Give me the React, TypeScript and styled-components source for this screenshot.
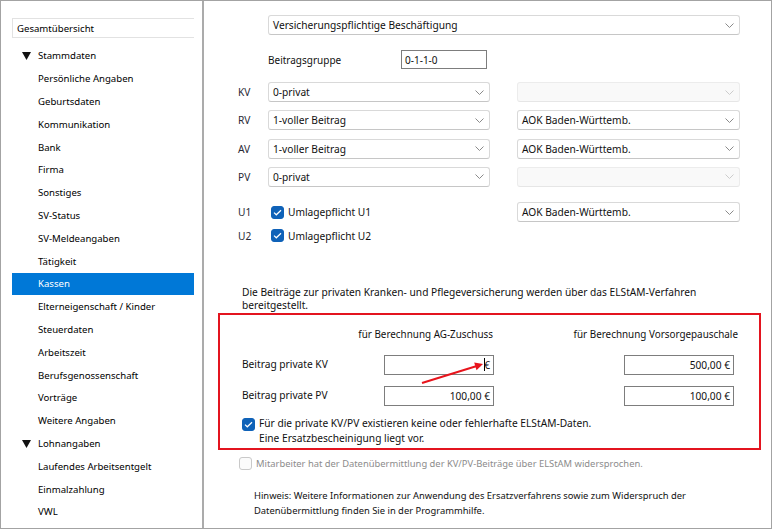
import React from 'react';
import styled, { createGlobalStyle } from 'styled-components';

const GlobalStyle = createGlobalStyle`
  html, body { margin: 0; padding: 0; background: #fff; }
  body {
    font-family: "Noto Sans", "Open Sans", sans-serif;
    font-size: 9.6px;
    color: #111;
  }
  * { box-sizing: border-box; }
`;

const Window = styled.div`
  width: 772px;
  height: 529px;
  display: flex;
  border: 1px solid #a3a3a3;
  background: #fff;
  overflow: hidden;
`;

/* ---------- Sidebar ---------- */
const Sidebar = styled.nav`
  width: 203px;
  flex: none;
  border-right: 2px solid #ababab;
  padding: 17px 0 0 11px;
`;

const SearchBox = styled.div`
  width: 182px;
  height: 20px;
  border: 1px solid #e2e2e2;
  border-right: none;
  display: flex;
  align-items: center;
  padding-left: 4px;
  color: #000;
`;

const Tree = styled.ul`
  list-style: none;
  margin: 6.6px 0 0 0;
  padding: 0;
`;

const TreeRow = styled.li<{ $group?: boolean; $selected?: boolean }>`
  width: 182px;
  height: 22.8px;
  display: flex;
  align-items: center;
  padding-left: ${p => (p.$group ? '10px' : '26px')};
  background: ${p => (p.$selected ? '#0078d7' : 'transparent')};
  color: ${p => (p.$selected ? '#fff' : '#000')};
  white-space: nowrap;
`;

const Caret = styled.span`
  width: 16px;
  display: inline-flex;
  align-items: center;
`;

/* ---------- Main ---------- */
const Main = styled.main`
  flex: 1;
  position: relative;
  display: flex;
  flex-direction: column;
  font-size: 10.2px;
`;

const SelectBox = styled.div<{ $disabled?: boolean; $width?: number; $col?: number }>`
  width: ${p => (p.$width ? `${p.$width}px` : 'auto')};
  grid-column: ${p => p.$col ?? 'auto'};
  height: 20px;
  display: flex;
  align-items: center;
  justify-content: space-between;
  padding: 0 5px 0 4px;
  border: 1px solid ${p => (p.$disabled ? '#ececec' : '#d9d9d9')};
  border-bottom-color: ${p => (p.$disabled ? '#e6e6e6' : '#c6c6c6')};
  border-radius: 3px;
  background: ${p => (p.$disabled ? '#f9f9f9' : '#fff')};
  color: #111;
  white-space: nowrap;
`;

const TopSelect = styled(SelectBox)`
  margin: 14px 0 0 64px;
`;

const GroupRow = styled.div`
  margin: 15px 0 0 64px;
  height: 19px;
  display: flex;
  align-items: center;
  font-size: 10px;
`;

const GroupLabel = styled.span`
  width: 133px;
`;

const TextBox = styled.div<{ $align?: 'left' | 'right'; $w?: number; $h?: number; $col?: number }>`
  width: ${p => p.$w ?? 110}px;
  height: ${p => p.$h ?? 20}px;
  grid-column: ${p => p.$col ?? 'auto'};
  border: 1px solid #7d7d7d;
  background: #fff;
  display: flex;
  align-items: center;
  justify-content: ${p => (p.$align === 'right' ? 'flex-end' : 'flex-start')};
  padding: 0 3px;
  color: #111;
`;

const InsList = styled.div`
  margin: 13px 0 0 34px;
  display: flex;
  flex-direction: column;
  gap: 8.3px;
`;

const InsRow = styled.div`
  display: grid;
  grid-template-columns: 30px 222px 27px 223px;
  align-items: center;
  height: 20px;
`;

const URows = styled.div`
  margin: 15.6px 0 0 34px;
  display: flex;
  flex-direction: column;
  gap: 3.2px;
`;

const RowLabel = styled.span`
  grid-column: 1;
  color: #2a2a35;
`;

const CheckLine = styled.label<{ $pad?: number; $disabled?: boolean }>`
  grid-column: 2;
  display: flex;
  align-items: center;
  gap: 4px;
  padding-left: ${p => p.$pad ?? 0}px;
  color: ${p => (p.$disabled ? '#8c8c8c' : '#111')};
  white-space: nowrap;
`;

const CheckBox = styled.span<{ $checked?: boolean }>`
  width: 13px;
  height: 13px;
  flex: none;
  border-radius: 3px;
  display: inline-flex;
  align-items: center;
  justify-content: center;
  background: ${p => (p.$checked ? '#0f62b8' : '#fbfbfb')};
  border: 1px solid ${p => (p.$checked ? '#0f62b8' : '#c9c9c9')};
`;

const Paragraph = styled.p<{ $mt: number; $lh: number; $ml: number; $fs?: number }>`
  margin: ${p => p.$mt}px 0 0 ${p => p.$ml}px;
  line-height: ${p => p.$lh}px;
  font-size: ${p => p.$fs ?? 10.2}px;
  color: #111;
`;

const RedBox = styled.section`
  margin: 0 0 0 14px;
  width: 543px;
  height: 137px;
  border: 2px solid #e3141f;
  padding: 11px 0 0 22px;
  display: grid;
  grid-template-columns: 142px 110px 130px 110px;
  grid-template-rows: 16px 33px 31px auto;
  align-items: end;
`;

const ColHead = styled.div<{ $col: string; $mr?: number }>`
  grid-column: ${p => p.$col};
  align-self: center;
  text-align: right;
  white-space: nowrap;
  margin-right: ${p => p.$mr ?? 0}px;
  font-size: 9.9px;
`;

const AmountLabel = styled.span`
  grid-column: 1;
  align-self: end;
  height: 20px;
  display: flex;
  align-items: center;
  padding-bottom: 2px;
`;

const BoxCheck = styled.div`
  grid-column: 1 / 5;
  display: flex;
  align-items: flex-start;
  gap: 4px;
  margin-top: 10px;
  line-height: 15px;
  align-self: start;
`;

const BoxCheckMark = styled(CheckBox)`
  margin-top: 2px;
`;

const DisabledRow = styled(CheckLine)`
  margin: 6px 0 0 35px;
  height: 15px;
  font-size: 9.4px;
`;

const TextCaret = styled.span`
  display: inline-block;
  width: 1px;
  height: 13px;
  background: #000;
  margin-right: -1px;
`;

const Arrow = styled.svg`
  position: absolute;
  left: 214px;
  top: 357px;
  width: 72px;
  height: 30px;
  overflow: visible;
`;

const Chevron = ({ light }: { light?: boolean }) => (
  <svg width="9" height="5" viewBox="0 0 9 5">
    <polyline points="0.5,0.5 4.5,4.5 8.5,0.5" fill="none" stroke={light ? '#cccccc' : '#8a8a8a'} strokeWidth="1" />
  </svg>
);

const Select = ({ value, disabled, col }: { value?: string; disabled?: boolean; col?: number }) => (
  <SelectBox $disabled={disabled} $col={col}>
    <span>{value ?? ''}</span>
    <Chevron light={disabled} />
  </SelectBox>
);

const CheckMarkSvg = () => (
  <svg width="9" height="7" viewBox="0 0 9 7">
    <polyline points="1,3.6 3.3,5.8 8,1.2" fill="none" stroke="#fff" strokeWidth="1.2" />
  </svg>
);

const Check = ({ checked }: { checked?: boolean }) => (
  <CheckBox $checked={checked}>{checked && <CheckMarkSvg />}</CheckBox>
);

const tree: { label: string; group?: boolean; selected?: boolean }[] = [
  { label: 'Stammdaten', group: true },
  { label: 'Persönliche Angaben' },
  { label: 'Geburtsdaten' },
  { label: 'Kommunikation' },
  { label: 'Bank' },
  { label: 'Firma' },
  { label: 'Sonstiges' },
  { label: 'SV-Status' },
  { label: 'SV-Meldeangaben' },
  { label: 'Tätigkeit' },
  { label: 'Kassen', selected: true },
  { label: 'Elterneigenschaft / Kinder' },
  { label: 'Steuerdaten' },
  { label: 'Arbeitszeit' },
  { label: 'Berufsgenossenschaft' },
  { label: 'Vorträge' },
  { label: 'Weitere Angaben' },
  { label: 'Lohnangaben', group: true },
  { label: 'Laufendes Arbeitsentgelt' },
  { label: 'Einmalzahlung' },
  { label: 'VWL' },
];

const ins = [
  { k: 'KV', v: '0-privat', kasse: '' },
  { k: 'RV', v: '1-voller Beitrag', kasse: 'AOK Baden-Württemb.' },
  { k: 'AV', v: '1-voller Beitrag', kasse: 'AOK Baden-Württemb.' },
  { k: 'PV', v: '0-privat', kasse: '' },
];

export default function App() {
  return (
    <>
      <GlobalStyle />
      <Window>
        <Sidebar>
          <SearchBox>Gesamtübersicht</SearchBox>
          <Tree>
            {tree.map(t => (
              <TreeRow key={t.label} $group={t.group} $selected={t.selected}>
                {t.group && (
                  <Caret>
                    <svg width="9" height="8" viewBox="0 0 9 8">
                      <polygon points="0,0 9,0 4.5,8" fill="#111" />
                    </svg>
                  </Caret>
                )}
                {t.label}
              </TreeRow>
            ))}
          </Tree>
        </Sidebar>

        <Main>
          <TopSelect $width={472}>
            <span>Versicherungspflichtige Beschäftigung</span>
            <Chevron />
          </TopSelect>

          <GroupRow>
            <GroupLabel>Beitragsgruppe</GroupLabel>
            <TextBox $w={86} $h={19}>0-1-1-0</TextBox>
          </GroupRow>

          <InsList>
            {ins.map(r => (
              <InsRow key={r.k}>
                <RowLabel>{r.k}</RowLabel>
                <Select value={r.v} col={2} />
                <Select value={r.kasse} disabled={!r.kasse} col={4} />
              </InsRow>
            ))}
          </InsList>

          <URows>
            <InsRow>
              <RowLabel>U1</RowLabel>
              <CheckLine $pad={3}>
                <Check checked />
                Umlagepflicht U1
              </CheckLine>
              <Select value="AOK Baden-Württemb." col={4} />
            </InsRow>
            <InsRow>
              <RowLabel>U2</RowLabel>
              <CheckLine $pad={3}>
                <Check checked />
                Umlagepflicht U2
              </CheckLine>
            </InsRow>
          </URows>

          <Paragraph $mt={40} $lh={13.5} $ml={38}>
            Die Beiträge zur privaten Kranken- und Pflegeversicherung werden über das ELStAM-Verfahren
            <br />
            bereitgestellt.
          </Paragraph>

          <RedBox>
            <ColHead $col="1 / 3" $mr={1}>für Berechnung AG-Zuschuss</ColHead>
            <ColHead $col="3 / 5" $mr={-4}>für Berechnung Vorsorgepauschale</ColHead>

            <AmountLabel>Beitrag private KV</AmountLabel>
            <TextBox $align="right" $col={2}>
              <TextCaret />€
            </TextBox>
            <TextBox $align="right" $col={4}>500,00 €</TextBox>

            <AmountLabel>Beitrag private PV</AmountLabel>
            <TextBox $align="right" $col={2}>100,00 €</TextBox>
            <TextBox $align="right" $col={4}>100,00 €</TextBox>

            <BoxCheck>
              <BoxCheckMark $checked>
                <CheckMarkSvg />
              </BoxCheckMark>
              <span>
                Für die private KV/PV existieren keine oder fehlerhafte ELStAM-Daten.
                <br />
                Eine Ersatzbescheinigung liegt vor.
              </span>
            </BoxCheck>
          </RedBox>

          <DisabledRow $disabled>
            <Check />
            Mitarbeiter hat der Datenübermittlung der KV/PV-Beiträge über ELStAM widersprochen.
          </DisabledRow>

          <Paragraph $mt={17} $lh={15.5} $ml={50} $fs={9.4}>
            Hinweis: Weitere Informationen zur Anwendung des Ersatzverfahrens sowie zum Widerspruch der
            <br />
            Datenübermittlung finden Sie in der Programmhilfe.
          </Paragraph>

          <Arrow viewBox="0 0 72 30">
            <line x1="4" y1="25" x2="58" y2="8.2" stroke="#e8141c" strokeWidth="2" />
            <polygon points="65,6 58.5,12.2 56.2,4.6" fill="#e8141c" />
          </Arrow>
        </Main>
      </Window>
    </>
  );
}
